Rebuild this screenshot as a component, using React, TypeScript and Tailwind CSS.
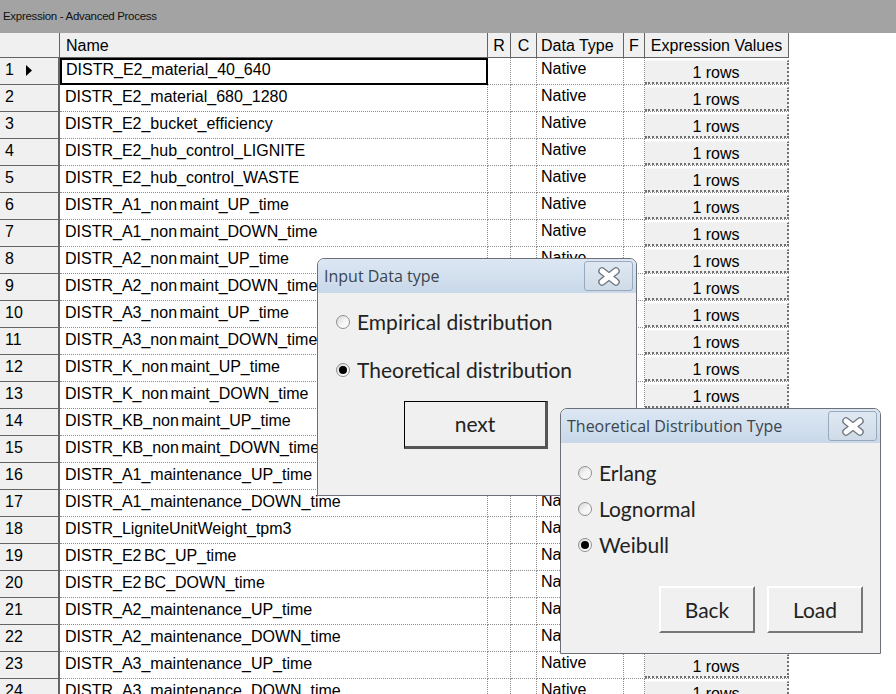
import React from 'react';

const names = [
  'DISTR_E2_material_40_640',
  'DISTR_E2_material_680_1280',
  'DISTR_E2_bucket_efficiency',
  'DISTR_E2_hub_control_LIGNITE',
  'DISTR_E2_hub_control_WASTE',
  'DISTR_A1_non maint_UP_time',
  'DISTR_A1_non maint_DOWN_time',
  'DISTR_A2_non maint_UP_time',
  'DISTR_A2_non maint_DOWN_time',
  'DISTR_A3_non maint_UP_time',
  'DISTR_A3_non maint_DOWN_time',
  'DISTR_K_non maint_UP_time',
  'DISTR_K_non maint_DOWN_time',
  'DISTR_KB_non maint_UP_time',
  'DISTR_KB_non maint_DOWN_time',
  'DISTR_A1_maintenance_UP_time',
  'DISTR_A1_maintenance_DOWN_time',
  'DISTR_LigniteUnitWeight_tpm3',
  'DISTR_E2 BC_UP_time',
  'DISTR_E2 BC_DOWN_time',
  'DISTR_A2_maintenance_UP_time',
  'DISTR_A2_maintenance_DOWN_time',
  'DISTR_A3_maintenance_UP_time',
  'DISTR_A3_maintenance_DOWN_time',
];

function Radio({ checked }: { checked?: boolean }) {
  return (
    <span className="relative inline-flex h-[14px] w-[14px] shrink-0 items-center justify-center rounded-full border border-[#8e8f8f] bg-gradient-to-br from-[#d4d4d4] via-[#f4f4f4] to-white">
      {checked && <span className="h-[8px] w-[8px] rounded-full bg-black" />}
    </span>
  );
}

function CloseButton() {
  return (
    <div className="flex h-[30px] w-[49px] items-center justify-center rounded-[3px] border border-[#9aaabd] bg-gradient-to-b from-[#dfe8f2] to-[#cfdbe8]">
      <svg width="24" height="19" viewBox="0 0 24 19">
        <path d="M5 4 L19 15 M19 4 L5 15" stroke="#6f7680" strokeWidth="7.5" strokeLinecap="round" />
        <path d="M5 4 L19 15 M19 4 L5 15" stroke="#ffffff" strokeWidth="5" strokeLinecap="round" />
      </svg>
    </div>
  );
}

function Window({
  title,
  className,
  children,
}: {
  title: string;
  className: string;
  children: React.ReactNode;
}) {
  return (
    <div
      className={`absolute flex flex-col overflow-hidden rounded-t-[7px] border border-[#6b7078] bg-[#f0f0f0] ${className}`}
    >
      <div className="flex h-[34px] shrink-0 items-center justify-between bg-gradient-to-b from-[#dce7f3] to-[#c8d8e9] pl-[6px] pr-[3px]">
        <span className="font-['Open_Sans',sans-serif] text-[16px] text-[#3b4550]">{title}</span>
        <CloseButton />
      </div>
      <div className="flex-1">{children}</div>
    </div>
  );
}

export default function App() {
  return (
    <div className="relative h-[694px] w-[896px] overflow-hidden bg-white font-['Liberation_Sans',Arial,sans-serif] text-black">
      {/* title bar */}
      <div className="flex h-[33px] items-center bg-[#a3a3a3] pl-[3px]">
        <span className="text-[11.5px] tracking-[-0.3px] text-[#111]">Expression - Advanced Process</span>
      </div>

      {/* header */}
      <div className="flex h-[25px] text-[16px]">
        <div className="w-[60px] border-r border-b border-[#646464] bg-[#f0f0f0]" />
        <div className="w-[428px] border-r border-b border-[#646464] bg-[#f0f0f0] pl-[6px] leading-[25px]">Name</div>
        <div className="w-[23px] border-r border-b border-[#646464] bg-[#f0f0f0] text-center leading-[25px]">R</div>
        <div className="w-[26px] border-r border-b border-[#646464] bg-[#f0f0f0] text-center leading-[25px]">C</div>
        <div className="w-[87px] border-r border-b border-[#646464] bg-[#f0f0f0] pl-[4px] leading-[25px]">Data Type</div>
        <div className="w-[21px] border-r border-b border-[#646464] bg-[#f0f0f0] text-center leading-[25px]">F</div>
        <div className="w-[144px] border-r border-b border-[#646464] bg-[#f0f0f0] text-center leading-[25px]">Expression Values</div>
      </div>

      {/* rows */}
      {names.map((n, i) => (
        <div key={i} className="flex h-[27px] text-[16px]">
          <div className="flex w-[60px] items-start border-r-2 border-b border-[#646464] bg-[#f0f0f0] pl-[5px] pt-[2px] leading-[20px]">
            <span>{i + 1}</span>
            {i === 0 && (
              <svg className="ml-[12px] mt-[5px]" width="7" height="11" viewBox="0 0 7 11">
                <path d="M0 0 L6 5.5 L0 11 Z" fill="#000" />
              </svg>
            )}
          </div>
          {i === 0 ? (
            <div className="w-[428px] border-2 border-black pl-[4px] leading-[20px]">{n}</div>
          ) : (
            <div className="w-[428px] border-r border-b border-dotted border-[#8c8c8c] pl-[5px] pt-[1px] leading-[22px] [word-spacing:-2px]">
              {n}
            </div>
          )}
          <div className="w-[23px] border-r border-b border-dotted border-[#8c8c8c]" />
          <div className="w-[26px] border-r border-b border-dotted border-[#8c8c8c]" />
          <div className="w-[87px] border-r border-b border-dotted border-[#8c8c8c] pl-[4px] leading-[22px]">Native</div>
          <div className="w-[21px] border-r border-b border-dotted border-[#8c8c8c]" />
          <div className="flex w-[144px] border-b border-dotted border-[#8c8c8c] pt-[2px]">
            <div className="flex-1 border-t border-t-white border-r-2 border-b-2 border-dotted border-[#707070] bg-[#f0f0f0] text-center leading-[24px]">
              1 rows
            </div>
          </div>
        </div>
      ))}

      {/* Input Data type dialog */}
      <Window title="Input Data type" className="left-[317px] top-[258px] h-[238px] w-[320px]">
        <div className="flex flex-col pl-[18px] pt-[15px] font-['Lato',sans-serif] text-[21px] text-[#222]">
          <label className="flex h-[28px] items-center gap-[7px]">
            <Radio />
            <span>Empirical distribution</span>
          </label>
          <label className="mt-[20px] flex h-[28px] items-center gap-[7px]">
            <Radio checked />
            <span>Theoretical distribution</span>
          </label>
          <div className="mt-[17px] pl-[68px]">
            <button className="h-[48px] w-[144px] border border-black border-r-[3px] border-b-[3px] border-r-[#555] border-b-[#555] bg-[#f0f0f0] text-[21px] text-[#222]">
              next
            </button>
          </div>
        </div>
      </Window>

      {/* Theoretical Distribution Type dialog */}
      <Window title="Theoretical Distribution Type" className="left-[560px] top-[408px] h-[246px] w-[321px]">
        <div className="flex flex-col pl-[17px] pt-[16px] font-['Lato',sans-serif] text-[21px] text-[#222]">
          <label className="flex h-[28px] items-center gap-[7px]">
            <Radio />
            <span>Erlang</span>
          </label>
          <label className="mt-[8px] flex h-[28px] items-center gap-[7px]">
            <Radio />
            <span>Lognormal</span>
          </label>
          <label className="mt-[8px] flex h-[28px] items-center gap-[7px]">
            <Radio checked />
            <span>Weibull</span>
          </label>
          <div className="mt-[27px] flex gap-[12px] pl-[81px]">
            <button className="h-[47px] w-[96px] border-2 border-white border-r-[#777] border-b-[#777] bg-[#f0f0f0] text-[21px] text-[#222]">
              Back
            </button>
            <button className="h-[47px] w-[96px] border-2 border-white border-r-[#777] border-b-[#777] bg-[#f0f0f0] text-[21px] text-[#222]">
              Load
            </button>
          </div>
        </div>
      </Window>
    </div>
  );
}
